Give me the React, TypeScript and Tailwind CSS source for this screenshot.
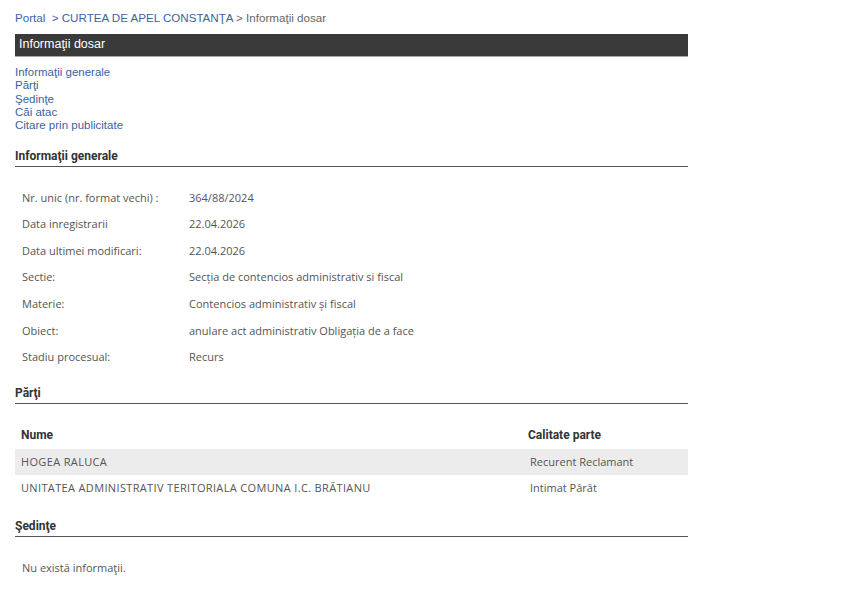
const generalRows: [string, string][] = [
  ['Nr. unic (nr. format vechi) :', '364/88/2024'],
  ['Data inregistrarii', '22.04.2026'],
  ['Data ultimei modificari:', '22.04.2026'],
  ['Sectie:', 'Secția de contencios administrativ si fiscal'],
  ['Materie:', 'Contencios administrativ și fiscal'],
  ['Obiect:', 'anulare act administrativ Obligația de a face'],
  ['Stadiu procesual:', 'Recurs'],
];

const parti: [string, string][] = [
  ['HOGEA RALUCA', 'Recurent Reclamant'],
  ['UNITATEA ADMINISTRATIV TERITORIALA COMUNA I.C. BRĂTIANU', 'Intimat Pârât'],
];

const links = ['Informaţii generale', 'Părţi', 'Şedinţe', 'Căi atac', 'Citare prin publicitate'];

function SectionTitle({ children }: { children: string }) {
  return (
    <div className="border-b border-[#555] pb-[3px] font-['Roboto',sans-serif] text-[12px] font-bold leading-[14px] text-[#333]">
      {children}
    </div>
  );
}

export default function App() {
  return (
    <div className="min-h-[592px] w-[855px] bg-white font-['Liberation_Sans',Arial,sans-serif]">
      <div className="w-[688px] pl-[15px] pt-[11px]">
        <div className="whitespace-pre text-[11.6px] leading-[14px] text-[#666]">
          <span className="text-[#3b62a3]">Portal</span>
          <span className="text-[#3b62a3]">{'  > CURTEA DE APEL CONSTANŢA'}</span>
          <span>{' > Informaţii dosar'}</span>
        </div>

        <div className="mt-[9px] border-b border-[#aaa] bg-[#3a3a3a] px-[4px] pt-[3px] pb-[4px] text-[12.5px] leading-[15px] text-white">
          Informaţii dosar
        </div>

        <div className="mt-[9px] flex flex-col text-[11.5px] leading-[13.3px] text-[#3b62a3]">
          {links.map(l => (
            <span key={l}>{l}</span>
          ))}
        </div>

        <div className="mt-[17px]">
          <SectionTitle>Informaţii generale</SectionTitle>
        </div>

        <div className="mt-[17px] font-['Open_Sans',sans-serif] text-[11px] text-[#555]">
          {generalRows.map(([k, v]) => (
            <div key={k} className="flex h-[26.6px] items-center">
              <span className="w-[174px] pl-[7px]">{k}</span>
              <span>{v}</span>
            </div>
          ))}
        </div>

        <div className="mt-[15px]">
          <SectionTitle>Părţi</SectionTitle>
        </div>

        <div className="mt-[17px] font-['Open_Sans',sans-serif] text-[11px]">
          <div className="flex h-[28px] items-center font-['Roboto',sans-serif] text-[12px] font-bold text-[#333]">
            <span className="w-[513px] pl-[6px]">Nume</span>
            <span>Calitate parte</span>
          </div>
          {parti.map(([n, c], i) => (
            <div key={n} className={`flex h-[26.5px] items-center text-[#555] ${i === 0 ? 'bg-[#ececec]' : ''}`}>
              <span className="w-[515px] pl-[6px] tracking-[0.35px]">{n}</span>
              <span>{c}</span>
            </div>
          ))}
        </div>

        <div className="mt-[17px]">
          <SectionTitle>Şedinţe</SectionTitle>
        </div>

        <div className="mt-[23px] pl-[7px] font-['Open_Sans',sans-serif] text-[11px] text-[#555]">Nu există informaţii.</div>
      </div>
    </div>
  );
}
